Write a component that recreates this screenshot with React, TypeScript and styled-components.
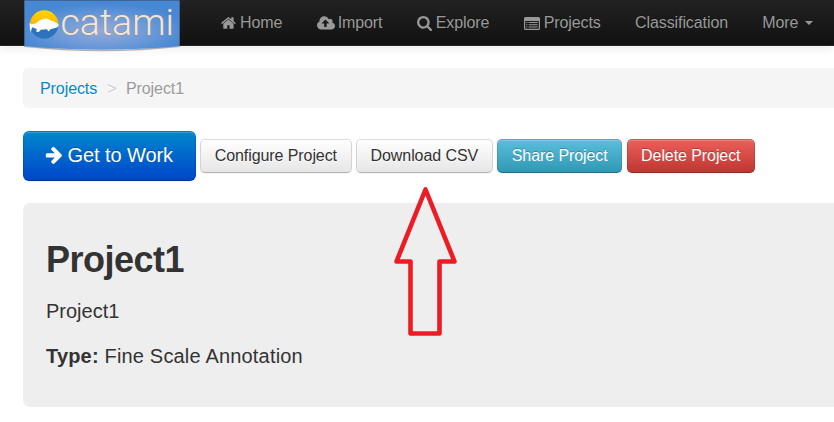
import React from "react";
import styled, { createGlobalStyle, css } from "styled-components";

const GlobalStyle = createGlobalStyle`
  * { box-sizing: border-box; }
  html, body { margin: 0; background: #fff; overflow: hidden; }
  body {
    font-family: "Liberation Sans", Arial, sans-serif;
    font-size: 16px;
    line-height: 22px;
    color: #333;
  }
`;

const Page = styled.div`
  position: relative;
  width: 834px;
  height: 422px;
  overflow: hidden;
`;

const Navbar = styled.nav`
  display: flex;
  height: 46px;
  padding-left: 24px;
  background: linear-gradient(#222, #111);
  border-bottom: 1px solid #252525;
  box-shadow: 0 1px 11px rgba(0, 0, 0, 0.1);
`;

const Brand = styled.a`
  display: block;
  width: 157px;
  height: 52px;
  margin-right: 23px;
  flex: none;
`;

const NavList = styled.div`
  display: flex;
  gap: 34.3px;
  padding-left: 17px;
`;

const NavItem = styled.a`
  display: flex;
  align-items: center;
  height: 46px;
  flex: none;
  color: #999;
  letter-spacing: -0.09px;
  white-space: nowrap;
  text-shadow: 0 -1px 0 rgba(0, 0, 0, 0.25);
`;

const Icon = styled.svg<{ $w: number; $h: number; $gap: number }>`
  display: block;
  flex: none;
  width: ${(p) => p.$w}px;
  height: ${(p) => p.$h}px;
  margin-right: ${(p) => p.$gap}px;
  fill: currentColor;
`;

const Caret = styled.span`
  margin: 0 0 0 7px;
  border: 4px solid transparent;
  border-top-color: #999;
  border-bottom: 0;
`;

const Content = styled.main`
  padding: 22px 0 0 23px;
`;

const Breadcrumb = styled.div`
  display: flex;
  align-items: center;
  height: 40px;
  padding: 2px 0 0 17px;
  background: #f5f5f5;
  border-radius: 5px 0 0 5px;
  color: #999;
  letter-spacing: -0.08px;
  text-shadow: 0 1px 0 #fff;
`;

const CrumbLink = styled.a`
  color: #0088cc;
`;

const Divider = styled.span`
  margin: 0 9.5px 0 10px;
  color: #ccc;
`;

const Actions = styled.div`
  display: flex;
  align-items: center;
  gap: 4.5px;
  height: 50px;
  margin-top: 23px;
`;

const tones = {
  plain: css`
    color: #333;
    background: linear-gradient(#fff, #e6e6e6);
    border-color: #dcdcdc #d4d4d4 #b3b3b3;
    text-shadow: 0 1px 1px rgba(255, 255, 255, 0.75);
  `,
  info: css`
    color: #fff;
    background: linear-gradient(#5bc0de, #2f96b4) border-box;
    border-color: rgba(0, 0, 0, 0.1) rgba(0, 0, 0, 0.1) rgba(0, 0, 0, 0.25);
    text-shadow: 0 -1px 0 rgba(0, 0, 0, 0.25);
  `,
  danger: css`
    color: #fff;
    background: linear-gradient(#ee5f5b, #bd362f) border-box;
    border-color: rgba(0, 0, 0, 0.1) rgba(0, 0, 0, 0.1) rgba(0, 0, 0, 0.25);
    text-shadow: 0 -1px 0 rgba(0, 0, 0, 0.25);
  `,
  primary: css`
    color: #fff;
    background: linear-gradient(#0088cc, #0044cc) border-box;
    border-color: rgba(0, 0, 0, 0.1) rgba(0, 0, 0, 0.1) rgba(0, 0, 0, 0.25);
    text-shadow: 0 -1px 0 rgba(0, 0, 0, 0.25);
  `,
};

const Button = styled.button<{ $tone: keyof typeof tones; $width: number; $large?: boolean }>`
  display: flex;
  align-items: center;
  justify-content: center;
  flex: none;
  width: ${(p) => p.$width}px;
  height: ${(p) => (p.$large ? 50 : 34)}px;
  padding: 0 ${(p) => (p.$large ? 1 : 0)}px ${(p) => (p.$large ? 2 : 1)}px 0;
  font: ${(p) => (p.$large ? 20 : 16)}px "Liberation Sans", Arial, sans-serif;
  letter-spacing: -0.08px;
  white-space: nowrap;
  border: 1px solid;
  border-radius: ${(p) => (p.$large ? 6 : 5)}px;
  box-shadow: inset 0 1px 0 rgba(255, 255, 255, 0.2), 0 1px 2px rgba(0, 0, 0, 0.05);
  ${(p) => tones[p.$tone]}
`;

const Hero = styled.section`
  height: 204px;
  margin-top: 22px;
  padding: 35px 0 0 23px;
  background: #eee;
  border-radius: 7px 0 0 7px;
  font-size: 20px;
`;

const Title = styled.h1`
  margin: 0;
  font-size: 36px;
  line-height: 44px;
  letter-spacing: -0.5px;
`;

const Detail = styled.p<{ $top: number; $tracking?: number }>`
  margin: ${(p) => p.$top}px 0 0;
  line-height: 30px;
  letter-spacing: ${(p) => p.$tracking ?? 0}px;
`;

const Pointer = styled.svg`
  position: absolute;
  left: 380px;
  top: 180px;
  width: 90px;
  height: 165px;
`;

const HomeIcon = () => (
  <Icon $w={16} $h={16} $gap={3} viewBox="64 0 1664 1792">
    <path d="M1408 992v480q0 26-19 45t-45 19h-384v-384h-256v384h-384q-26 0-45-19t-19-45v-480q0-1 .5-3t.5-3l575-474 575 474q1 2 1 6zm223-69l-62 74q-8 9-21 11h-3q-13 0-21-7l-692-577-692 577q-12 8-24 7-13-2-21-11l-62-74q-8-10-7-23.5t11-21.5l719-599q32-26 76-26t76 26l244 204v-195q0-14 9-23t23-9h192q14 0 23 9t9 23v408l219 182q10 8 11 21.5t-7 23.5z" />
  </Icon>
);

const UploadIcon = () => (
  <Icon $w={18} $h={17} $gap={3} viewBox="-64 0 1920 1792">
    <path d="M1216 864q0-14-9-23l-352-352q-9-9-23-9t-23 9l-351 351q-10 12-10 24 0 14 9 23t23 9h224v352q0 13 9.500 22.500t22.500 9.500h192q13 0 22.500-9.500t9.500-22.500v-352h224q13 0 22.500-9.500t9.500-22.500zm640 288q0 159-112.500 271.500t-271.500 112.500h-1088q-185 0-316.500-131.500t-131.500-316.500q0-130 70-240t188-165q-2-30-2-43 0-212 150-362t362-150q156 0 285.500 87t188.500 231q71-62 166-62 106 0 181 75t75 181q0 76-41 138 130 31 213.500 135.500t83.500 238.500z" />
  </Icon>
);

const SearchIcon = () => (
  <Icon $w={15} $h={15} $gap={4} viewBox="64 128 1664 1664">
    <path d="M1216 832q0-185-131.500-316.500t-316.500-131.500-316.500 131.500-131.500 316.500 131.500 316.500 316.500 131.500 316.500-131.500 131.500-316.500zm512 832q0 52-38 90t-90 38q-54 0-90-38l-343-342q-179 124-399 124-143 0-273.500-55.500t-225-150-150-225-55.500-273.500 55.500-273.500 150-225 225-150 273.500-55.500 273.500 55.500 225 150 150 225 55.500 273.500q0 220-124 399l343 343q37 37 37 90z" />
  </Icon>
);

const ListIcon = () => (
  <Icon $w={16} $h={13} $gap={4} viewBox="0 0 16 13">
    <path
      fillRule="evenodd"
      d="M1.500 0h13A1.500 1.500 0 0 1 16 1.500v10a1.500 1.500 0 0 1-1.500 1.500h-13A1.500 1.500 0 0 1 0 11.500v-10A1.500 1.500 0 0 1 1.500 0zM1.200 4v7.400q0 .4.400.4h12.800q.4 0 .4-.4V4zM2.300 5h1.200v1H2.300zM4.600 5h9.100v1H4.600zM2.300 7.200h1.200v1H2.300zM4.600 7.200h9.100v1H4.600zM2.300 9.500h1.200v1H2.300zM4.600 9.500h9.100v1H4.600z"
    />
  </Icon>
);

const ArrowIcon = () => (
  <Icon $w={17} $h={17} $gap={6} viewBox="64 190 1536 1550">
    <path d="M1600 960q0 54-37 91l-651 651q-39 37-91 37-51 0-90-37l-75-75q-38-38-38-91t38-91l293-293h-704q-52 0-84.500-37.500t-32.500-90.500v-128q0-53 32.500-90.500t84.500-37.500h704l-293-294q-38-36-38-90t38-90l75-75q38-38 90-38 53 0 91 38l651 651q37 35 37 90z" />
  </Icon>
);

const Logo = () => (
  <svg width="157" height="52" viewBox="0 0 157 52">
    <defs>
      <radialGradient id="banner" cx="0.5" cy="0.62" r="0.55">
        <stop offset="0" stopColor="#98a8d6" />
        <stop offset="0.5" stopColor="#719bd8" />
        <stop offset="1" stopColor="#4788d4" />
      </radialGradient>
      <linearGradient id="sun" x2="0" y2="1">
        <stop offset="0" stopColor="#ffd500" />
        <stop offset="1" stopColor="#fbb800" />
      </linearGradient>
    </defs>
    <path d="M0 45Q78 55 156 45V47Q78 55.500 0 47z" fill="#777" opacity="0.55" />
    <path d="M.5 .5H155.500V46Q78 53.500 .5 46z" fill="url(#banner)" />
    <path d="M.5 46V.5H155.500V46" fill="none" stroke="#4a6b9b" strokeOpacity="0.7" />
    <path d="M6 24.500a14.200 14.200 0 0 1 28.400 0z" fill="url(#sun)" />
    <path d="M6 24.500a14.200 14.200 0 0 0 28.400 0z" fill="#2e72bd" />
    <path
      d="M5.500 23l2.200 1.300 3.800-.7c2-1.400 3-3 5.300-3.800l5-1.400 2.400.6 1.800 1.300c3.500.6 6.500 2.300 9 4.800-.7 2-3 3.200-5.600 3.500l-2.400.5-2.800 2.300-1-2.200-6.500.6-2 2.200-2.400-.2.400-2.900-4.400-1.600-1.800 4.600-.6-3.400z"
      fill="#fff"
    />
    <text
      x="36.500"
      y="34.500"
      textLength="113.500"
      lengthAdjust="spacingAndGlyphs"
      fontFamily="Roboto, sans-serif"
      fontWeight="300"
      fontSize="37"
      fill="#f0e8d8"
      stroke="#8a8f96"
      strokeWidth="0.8"
      paintOrder="stroke"
    >
      catami
    </text>
  </svg>
);

export default function App() {
  return (
    <Page>
      <GlobalStyle />
      <Navbar>
        <Brand>
          <Logo />
        </Brand>
        <NavList>
          <NavItem><HomeIcon />Home</NavItem>
          <NavItem><UploadIcon />Import</NavItem>
          <NavItem><SearchIcon />Explore</NavItem>
          <NavItem><ListIcon />Projects</NavItem>
          <NavItem>Classification</NavItem>
          <NavItem>More<Caret /></NavItem>
        </NavList>
      </Navbar>
      <Content>
        <Breadcrumb>
          <CrumbLink>Projects</CrumbLink>
          <Divider>&gt;</Divider>
          <span>Project1</span>
        </Breadcrumb>
        <Actions>
          <Button $tone="primary" $width={172.6} $large><ArrowIcon />Get to Work</Button>
          <Button $tone="plain" $width={151.5}>Configure Project</Button>
          <Button $tone="plain" $width={136.5}>Download CSV</Button>
          <Button $tone="info" $width={125.2}>Share Project</Button>
          <Button $tone="danger" $width={128}>Delete Project</Button>
        </Actions>
        <Hero>
          <Title>Project1</Title>
          <Detail $top={14}>Project1</Detail>
          <Detail $top={15} $tracking={0.18}><b>Type:</b> Fine Scale Annotation</Detail>
        </Hero>
      </Content>
      <Pointer viewBox="0 0 90 165" fill="none" stroke="#ed1c24" strokeWidth="4.600" strokeLinejoin="round">
        <path d="M45.500 9.500L74.500 81.500H59.500V153.500H30.500V81.500H16.500z" />
      </Pointer>
    </Page>
  );
}
